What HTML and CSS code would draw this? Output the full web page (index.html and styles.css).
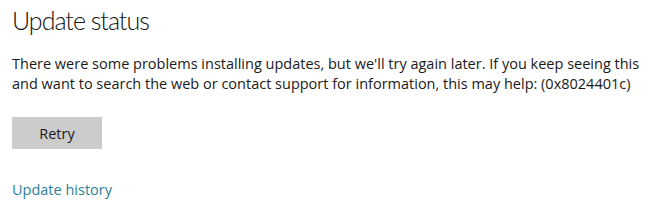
FILE: index.html
```html
<!DOCTYPE html>
<html lang="en">
<head>
    <meta charset="UTF-8">
    <title>Update status</title>
    <link rel="stylesheet" href="styles.css">
</head>
<body>
    <div class="panel">
        <h1 class="title">Update status</h1>
        <p class="message">There were some problems installing updates, but we'll try again later. If you keep seeing this and want to search the web or contact support for information, this may help: (0x8024401c)</p>
        <button class="retry">Retry</button>
        <a class="history" href="#">Update history</a>
    </div>
</body>
</html>
```

FILE: styles.css
```css
body {
    margin: 0;
    background-color: #ffffff;
    color: #1a1a1a;
    font-family: "Open Sans", "Noto Sans", sans-serif;
}
.panel {
    padding: 0 12px;
    display: flex;
    flex-direction: column;
    align-items: flex-start;
}
.title {
    font-family: Lato, "Open Sans", sans-serif;
    font-size: 25px;
    font-weight: 300;
    letter-spacing: -1px;
    margin: 3px 0 0;
    line-height: 34px;
    color: #111111;
}
.message {
    font-size: 14.5px;
    line-height: 20px;
    margin: 17px 0 0;
    width: 630px;
}
.retry {
    margin-top: 23px;
    width: 90px;
    height: 32px;
    border: none;
    background-color: #cccccc;
    color: #1a1a1a;
    font-family: inherit;
    font-size: 14.5px;
    padding: 0;
}
.history {
    margin-top: 31px;
    font-size: 14.5px;
    color: #2e7f97;
    text-decoration: none;
}
```
